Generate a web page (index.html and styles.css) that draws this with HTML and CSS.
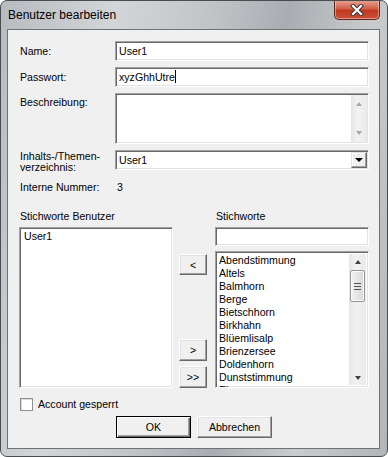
FILE: index.html
```html
<!DOCTYPE html>
<html lang="de">
<head>
  <meta charset="UTF-8" />
  <title>Benutzer bearbeiten</title>
  <link rel="stylesheet" href="styles.css">
</head>
<body>
<div class="window">
  <div class="titlebar">
    <span class="title">Benutzer bearbeiten</span>
    <div class="close">
      <svg width="16" height="12" viewBox="0 0 16 12">
        <path d="M4 2 L12 10 M12 2 L4 10" stroke="#3a3a3a" stroke-width="4.2" stroke-linecap="square" fill="none"/>
        <path d="M4 2 L12 10 M12 2 L4 10" stroke="#ffffff" stroke-width="2.2" stroke-linecap="square" fill="none"/>
      </svg>
    </div>
  </div>

  <div class="client">
    <div class="form">
      <label class="lbl">Name:</label>
      <div class="field">User1</div>

      <label class="lbl">Passwort:</label>
      <div class="field">xyzGhhUtre<span class="caret"></span></div>

      <label class="lbl top">Beschreibung:</label>
      <div class="field memo">
        <div class="vscroll">
          <span class="arrow up dim"></span>
          <span class="arrow down dim"></span>
        </div>
      </div>

      <label class="lbl two">Inhalts-/Themen-<br>verzeichnis:</label>
      <div class="field combo">User1
        <div class="drop"><span class="arrow down"></span></div>
      </div>
    </div>

    <div class="info"><span class="info-lbl">Interne Nummer:</span><span>3</span></div>

    <div class="lists">
      <div class="col">
        <div class="cap">Stichworte Benutzer</div>
        <div class="field listbox user">
          <div class="item">User1</div>
        </div>
      </div>

      <div class="movers">
        <button type="button" class="btn mv first">&lt;</button>
        <button type="button" class="btn mv second">&gt;</button>
        <button type="button" class="btn mv third">&gt;&gt;</button>
      </div>

      <div class="col">
        <div class="cap">Stichworte</div>
        <div class="field search"></div>
        <div class="field listbox words">
          <div class="items">
            <div class="item">Abendstimmung</div>
            <div class="item">Altels</div>
            <div class="item">Balmhorn</div>
            <div class="item">Berge</div>
            <div class="item">Bietschhorn</div>
            <div class="item">Birkhahn</div>
            <div class="item">Blüemlisalp</div>
            <div class="item">Brienzersee</div>
            <div class="item">Doldenhorn</div>
            <div class="item">Dunststimmung</div>
            <div class="item">Eiger</div>
          </div>
          <div class="vscroll list-scroll">
            <span class="arrow up"></span>
            <div class="thumb"><i></i><i></i><i></i></div>
            <span class="arrow down"></span>
          </div>
        </div>
      </div>
    </div>

    <div class="check">
      <span class="box"></span>
      <span>Account gesperrt</span>
    </div>

    <div class="actions">
      <button type="button" class="btn act default">OK</button>
      <button type="button" class="btn act">Abbrechen</button>
    </div>
  </div>
</div>
</body>
</html>
```

FILE: styles.css
```css
* {
  box-sizing: border-box;
}

body {
  margin: 0;
  background-color: #ffffff;
  font-family: 'Liberation Sans', Arial, sans-serif;
  font-size: 10.6px;
  color: #000;
}

.window {
  width: 388px;
  height: 457px;
  border: 1px solid #4a4d50;
  border-radius: 7px;
  background: linear-gradient(100deg, #b7bbbf 0%, #d3d6d8 25%, #c2c5c8 45%, #a9adb1 62%, #c9cbcd 80%, #b3b6b9 100%);
  overflow: hidden;
}

.titlebar {
  height: 28px;
  display: flex;
  align-items: flex-start;
  position: relative;
}

.title {
  font-size: 12px;
  margin: 7px 0 0 7px;
  line-height: 15px;
  color: #000;
}

.close {
  position: absolute;
  top: -1px;
  left: 333px;
  width: 46px;
  height: 20px;
  border: 1px solid #5e2a20;
  border-top: none;
  border-radius: 0 0 5px 5px;
  background: linear-gradient(#e9a597 0%, #d2624b 45%, #c0391f 55%, #c9513a 100%);
  box-shadow: inset 0 0 0 1px rgba(255, 220, 210, 0.5);
  display: flex;
  align-items: center;
  justify-content: center;
}

.client {
  margin-left: 6px;
  width: 373px;
  height: 420px;
  border: 1px solid #6f7275;
  background-color: #f0f0f0;
  padding-top: 11px;
}

/* sunken edit fields */
.field {
  background: #fff;
  border: 1px solid;
  border-color: #a0a0a0 #ffffff #ffffff #a0a0a0;
  box-shadow: inset 1px 1px #696969, inset -1px -1px #e3e3e3;
  padding: 0 3px;
  line-height: 18px;
  height: 20px;
  position: relative;
  white-space: nowrap;
}

.form {
  display: grid;
  grid-template-columns: 95px 254px;
  grid-template-rows: 20px 20px 51px 20px;
  row-gap: 6px;
  padding-left: 12px;
}

.lbl {
  align-self: center;
  line-height: 13px;
}

.lbl.top {
  align-self: start;
  padding-top: 3px;
}

.lbl.two {
  align-self: start;
  line-height: 11px;
  padding-top: 1px;
}

.caret {
  display: inline-block;
  width: 1px;
  height: 13px;
  background: #000;
  vertical-align: -2px;
}

.memo {
  height: 51px;
}

.vscroll {
  position: absolute;
  top: 1px;
  right: 1px;
  bottom: 1px;
  width: 16px;
  background: linear-gradient(90deg, #e6e6e6, #f2f2f2 40%, #eaeaea);
  display: flex;
  flex-direction: column;
  justify-content: space-between;
  align-items: center;
  padding: 7px 0;
}

.arrow {
  width: 0;
  height: 0;
  border-left: 3.5px solid transparent;
  border-right: 3.5px solid transparent;
}

.arrow.up {
  border-bottom: 4px solid #404040;
}

.arrow.down {
  border-top: 4px solid #404040;
}

.arrow.dim.up {
  border-bottom-color: #a8a8a8;
}

.arrow.dim.down {
  border-top-color: #a8a8a8;
}

.combo .drop {
  position: absolute;
  top: 1px;
  right: 1px;
  width: 16px;
  height: 16px;
  background: #f0f0f0;
  border: 1px solid;
  border-color: #e3e3e3 #696969 #696969 #e3e3e3;
  box-shadow: inset -1px -1px #a0a0a0, inset 1px 1px #fff;
  display: flex;
  align-items: center;
  justify-content: center;
}

.combo .drop .arrow {
  border-left-width: 4px;
  border-right-width: 4px;
  border-top: 4px solid #000;
}

.info {
  margin-top: 11px;
  padding-left: 12px;
  line-height: 13px;
  display: flex;
}

.info-lbl {
  width: 97px;
}

.lists {
  display: flex;
  margin-top: 16px;
  padding-left: 11px;
}

.col {
  width: 154px;
  display: flex;
  flex-direction: column;
}

.cap {
  line-height: 13px;
  padding-left: 1px;
  margin-bottom: 4px;
}

.listbox {
  height: 161px;
  padding: 1px 4px;
  line-height: 13px;
}

.listbox.user .item {
  padding-top: 1px;
}

.search {
  height: 19px;
}

.listbox.words {
  height: 137px;
  margin-top: 5px;
  overflow: hidden;
  padding: 2px 2px;
}

.listbox.words .items {
  margin-right: 17px;
}

.listbox.words .item {
  line-height: 13px;
  padding-left: 1px;
}

.list-scroll {
  justify-content: flex-start;
  padding: 6px 0 0;
  width: 17px;
  top: 2px;
  right: 2px;
  bottom: 2px;
}

.list-scroll .arrow.down {
  margin-top: auto;
  margin-bottom: 5px;
}

.thumb {
  margin-top: 6px;
  width: 15px;
  height: 32px;
  border: 1px solid #979797;
  border-radius: 2px;
  background: linear-gradient(90deg, #f3f3f3, #e4e4e4 50%, #d9d9d9);
  box-shadow: inset 0 0 0 1px #fafafa;
  display: flex;
  flex-direction: column;
  align-items: center;
  justify-content: center;
  gap: 2px;
}

.thumb i {
  display: block;
  width: 7px;
  height: 1px;
  background: #555;
}

/* raised buttons */
.btn {
  font-family: 'Liberation Sans', Arial, sans-serif;
  font-size: 10.6px;
  color: #000;
  background: #f0f0f0;
  border: 1px solid;
  border-color: #ffffff #696969 #696969 #ffffff;
  box-shadow: inset -1px -1px #a0a0a0, inset 1px 1px #e3e3e3;
  padding: 0;
  height: 22px;
  line-height: 18px;
}

.movers {
  width: 28px;
  margin: 0 8px 0 6px;
  display: flex;
  flex-direction: column;
}

.mv {
  width: 28px;
}

.mv.first {
  margin-top: 44px;
  height: 21px;
}

.mv.second {
  margin-top: 64px;
}

.mv.third {
  margin-top: 5px;
}

.check {
  display: flex;
  align-items: center;
  gap: 5px;
  margin-top: 10px;
  padding-left: 12px;
  height: 13px;
  line-height: 13px;
}

.box {
  width: 13px;
  height: 13px;
  background: #fff;
  border: 1px solid #8e8f8f;
  box-shadow: inset 1px 1px #dcdcdc;
}

.actions {
  display: flex;
  gap: 6px;
  margin-top: 5px;
  padding-left: 108px;
}

.act {
  width: 75px;
}

.act.default {
  border: 1px solid #000;
  box-shadow: inset 1px 1px #fff, inset -1px -1px #696969, inset -2px -2px #a0a0a0;
}
```
